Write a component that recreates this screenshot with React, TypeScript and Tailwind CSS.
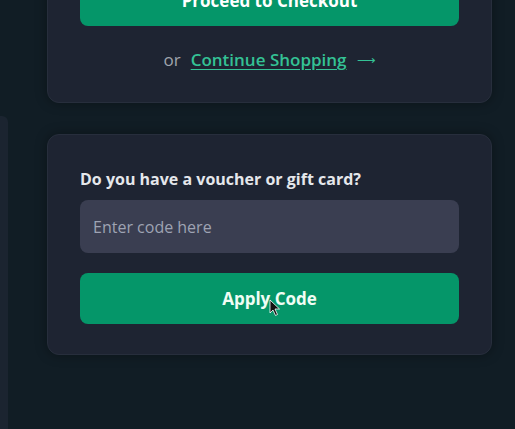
import React from "react";

export default function App() {
  return (
    <div className="relative h-[429px] w-[515px] overflow-hidden bg-[#111d25] font-['Open_Sans','Noto_Sans',sans-serif]">
      <div className="flex">
        <div className="mt-[116px] h-[400px] w-[8px] shrink-0 rounded-r-md bg-[#1b2430]" />
        <div className="-mt-[58px] ml-[39px] flex w-[445px] flex-col gap-[31px]">
          <div className="rounded-xl border border-[#272e3c] bg-[#1e2432] px-[32px] pb-[32px] pt-[32px] shadow-[0_0_12px_rgba(0,0,0,0.35)]">
            <button className="flex h-[51px] w-full items-center justify-center rounded-lg bg-[#059669] text-[17px] font-bold text-white">
              Proceed to Checkout
            </button>
            <div className="mt-[24px] flex h-[20px] items-center justify-center text-[17px] leading-[20px]">
              <span className="text-[#a0a4ad]">or</span>
              <span className="ml-[10px] font-semibold text-[#34c295] underline underline-offset-[3px]">
                Continue Shopping
              </span>
              <span className="ml-[10px] text-[13px] text-[#34c295]">⟶</span>
            </div>
          </div>
          <div className="rounded-xl border border-[#272e3c] bg-[#1e2432] px-[32px] pb-[30px] pt-[34px] shadow-[0_0_12px_rgba(0,0,0,0.35)]">
            <div className="h-[20px] text-[16px] font-bold leading-[20px] text-[#e5e7eb]">
              Do you have a voucher or gift card?
            </div>
            <div className="mt-[11px] flex h-[53px] items-center rounded-lg bg-[#3a3e51] px-[13px] text-[16px] text-[#9ea3b3]">
              Enter code here
            </div>
            <button className="relative mt-[20px] flex h-[51px] w-full items-center justify-center rounded-lg bg-[#059669] text-[17px] font-bold text-[#f0fdf4]">
              Apply Code
            </button>
          </div>
        </div>
      </div>
      <svg
        className="absolute left-[269px] top-[299px]"
        width="12"
        height="18"
        viewBox="0 0 12 18"
      >
        <path d="M1 1 L1 14 L4 11 L6.5 16.5 L8.5 15.5 L6 10 L10.5 10 Z" fill="#111" stroke="#fff" strokeWidth="0.8" />
      </svg>
    </div>
  );
}
